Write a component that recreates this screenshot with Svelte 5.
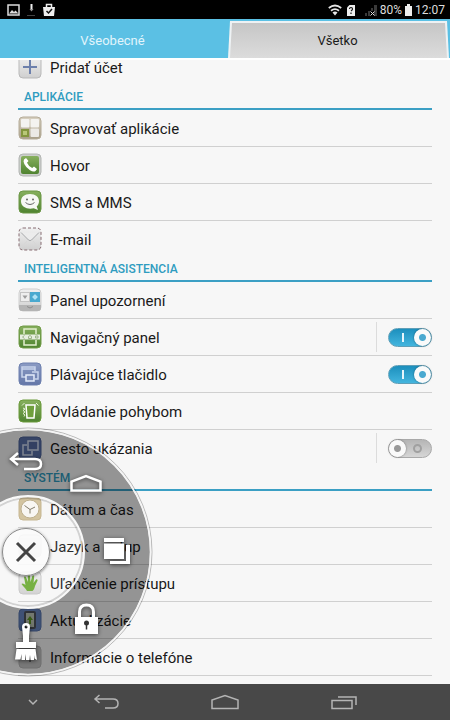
<script lang="ts">
  type Item = { icon: string; label: string; toggle?: boolean; on?: boolean; split?: boolean };
  type Section = { title: string; items: Item[] };

  let activeTab = $state('all');
  let menuOpen = $state(true);

  const tabs = [
    { id: 'general', label: 'Všeobecné' },
    { id: 'all', label: 'Všetko' },
  ];

  let sections: Section[] = $state([
    {
      title: 'Aplikácie',
      items: [
        { icon: 'apps', label: 'Spravovať aplikácie' },
        { icon: 'call', label: 'Hovor' },
        { icon: 'sms', label: 'SMS a MMS' },
        { icon: 'mail', label: 'E-mail' },
      ],
    },
    {
      title: 'Inteligentná asistencia',
      items: [
        { icon: 'panel', label: 'Panel upozornení' },
        { icon: 'navbar', label: 'Navigačný panel', toggle: true, on: true, split: true },
        { icon: 'float', label: 'Plávajúce tlačidlo', toggle: true, on: true },
        { icon: 'motion', label: 'Ovládanie pohybom' },
        { icon: 'gesture', label: 'Gesto ukázania', toggle: true, on: false, split: true },
      ],
    },
    {
      title: 'Systém',
      items: [
        { icon: 'clock', label: 'Dátum a čas' },
        { icon: 'lang', label: 'Jazyk a vstup' },
        { icon: 'hand', label: 'Uľahčenie prístupu' },
        { icon: 'update', label: 'Aktualizácie' },
        { icon: 'about', label: 'Informácie o telefóne' },
      ],
    },
  ]);
</script>

{#snippet glyph(name: string)}
  <svg class="icon" viewBox="0 0 24 24" aria-hidden="true">
    {#if name === 'add'}
      <rect x="1" y="1" width="22" height="22" rx="4" fill="url(#silver)" stroke="#b9b9b9" />
      <path d="M12 5v14M5 12h14" stroke="#6d80ac" stroke-width="2" />
    {:else if name === 'apps'}
      <rect x="1" y="1" width="22" height="22" rx="4" fill="url(#sand)" stroke="#b5ac98" />
      <rect x="3" y="3" width="8.500" height="8.500" rx="1" fill="#f4f3f0" />
      <rect x="12.500" y="3" width="8.500" height="8.500" rx="1" fill="#f4f3f0" />
      <rect x="12.500" y="12.500" width="8.500" height="8.500" rx="1" fill="#eceae6" />
      <rect x="4" y="14" width="6" height="6" fill="#b9c878" stroke="#84963f" stroke-width="2" />
    {:else if name === 'call'}
      <rect x="1" y="1" width="22" height="22" rx="4" fill="#cbcecb" stroke="#b2b5b2" />
      <rect x="3" y="3" width="18" height="18" rx="2" fill="url(#green)" />
      <path d="M6 6.500 8 5l2.500 3-1.500 1.800q1.500 3.600 5.200 5.200l1.800-1.500 3 2.500-1.500 2q-2 1.500-5.500-.8-4-2.500-5.700-6.200-1.300-3-.3-4.500z" fill="#fff" />
    {:else if name === 'sms'}
      <rect x="1" y="1" width="22" height="22" rx="4" fill="url(#green)" stroke="#6a9645" />
      <path d="M12 4c5.500 0 9 3 9 7.200 0 2.300-1 4-2.300 5.200l1.300 3.600-4.300-1.800c-6 1.600-12.700-1.200-12.700-7C3 7 6.500 4 12 4z" fill="#f7f8f5" />
      <circle cx="9" cy="9.500" r="1" fill="#666" />
      <circle cx="15" cy="9.500" r="1" fill="#666" />
      <path d="M7.500 12.500q4.500 4 9 0" fill="none" stroke="#666" />
    {:else if name === 'mail'}
      <rect x="1" y="1" width="22" height="22" rx="4" fill="url(#silver)" stroke="#876d72" stroke-dasharray="3 2" />
      <path d="M3 5.500 10.500 13q1.500 1.300 3 0L21 5.500" fill="#ececec" stroke="#a6a8aa" />
      <path d="M3 20.500 9 14M21 20.500 15 14" stroke="#d7d7d7" />
    {:else if name === 'panel'}
      <rect x="1" y="1" width="22" height="22" rx="4" fill="url(#silver)" stroke="#cfcfcf" />
      <path d="M1 17h22v3q0 3-3 3H4q-3 0-3-3z" fill="#b4b4b4" />
      <rect x="2.500" y="4.500" width="9" height="9" fill="#eee" stroke="#c3c3c3" />
      <path d="M4.500 7.500h5L7 11z" fill="#9c9c9c" />
      <rect x="12" y="4" width="10" height="10" fill="#49a9cf" />
      <circle cx="17" cy="9" r="2" fill="#d9f2fc" />
      <path d="M17 6v6M14 9h6" stroke="#9edcf3" />
      <path d="m9 18.500 3 1.500 3-1.500" fill="none" stroke="#8c8c8c" />
    {:else if name === 'navbar'}
      <rect x="1" y="1" width="22" height="22" rx="4" fill="url(#green)" stroke="#719b47" />
      <path d="M6 9V4h12v5M6 15v5h12v-5" fill="none" stroke="#e3efcf" stroke-width="1.500" />
      <rect x="2" y="9.500" width="20" height="5" fill="#e7eee0" />
      <path d="m6.500 10.500-2 1.500 2 1.500M10.500 13.500v-2l1.500-1 1.500 1v2zM17.500 11h2.500v2h-2.500z" fill="none" stroke="#9bb387" />
    {:else if name === 'float'}
      <rect x="1" y="1" width="22" height="22" rx="4" fill="url(#slate)" stroke="#6c7fae" />
      <path d="M8 15H4V5h13v4M4 7h13M14 10h6v7h-3" fill="none" stroke="#c8d3ec" stroke-width="1.500" />
      <rect x="8" y="13" width="8" height="6" fill="#7b8dbb" stroke="#e5ecfa" stroke-width="1.500" />
    {:else if name === 'motion'}
      <rect x="1" y="1" width="22" height="22" rx="4" fill="url(#green)" stroke="#6b9a3b" />
      <path d="M8 6h9l-1 13H9z" fill="#6f9f3d" stroke="#fff" stroke-width="1.500" />
      <path d="M4 6.500 6.500 4M20.500 6.500 18 4M5 9l2 1-2 1.500 2 1.500-2 1.500 2 1.500-1 1.500" fill="none" stroke="#e7f3d8" />
    {:else if name === 'gesture'}
      <rect x="1" y="1" width="22" height="22" rx="4" fill="#5b72ab" stroke="#4d639a" />
      <path d="M9 9H5v10h9v-4" fill="none" stroke="#d3dcf2" stroke-width="1.500" />
      <rect x="10" y="5" width="10" height="9" fill="#566ca3" stroke="#d3dcf2" stroke-width="1.500" />
    {:else if name === 'clock'}
      <rect x="1" y="1" width="22" height="22" rx="4" fill="#d0bf98" stroke="#c2b189" />
      <circle cx="12" cy="12" r="9" fill="#f8f6f1" stroke="#b9aa86" />
      <path d="m6.500 8.500 5.500 4 5-2.500M12 12.500v4" fill="none" stroke="#77705f" />
    {:else if name === 'lang'}
      <rect x="1" y="1" width="22" height="22" rx="4" fill="url(#silver)" stroke="#c9c9c9" />
    {:else if name === 'hand'}
      <rect x="1" y="1" width="22" height="22" rx="4" fill="url(#silver)" stroke="#c6c6c6" />
      <path d="M9 20c-1-2-4-5-5.500-7 1-1.300 2.500-.3 4 1L6 6c1.200-1 2 0 2.300 1l1.700 4-.3-7c.8-1.200 2-.8 2.200.4l.7 6.600L14.300 5c.8-1 2-.5 1.900.8L15.500 12 18 8.500c1-.7 2 .2 1.500 1.300L17 15c-.5 2-1 3.600-2.500 5z" fill="#6cab35" />
    {:else if name === 'update'}
      <rect x="1" y="1" width="22" height="22" rx="4" fill="#6a88c4" stroke="#5a76b0" />
      <rect x="7" y="4" width="10" height="16" rx="1" fill="#c0c8ba" stroke="#4f545e" stroke-width="2" />
      <path d="m12 8 3 4h-2v4h-2v-4H9z" fill="#5f9a24" />
    {:else}
      <rect x="1" y="1" width="22" height="22" rx="4" fill="#c8c8c8" stroke="#bababa" />
      <path d="M12 10v7M12 6v2" stroke="#777" stroke-width="2" />
    {/if}
  </svg>
{/snippet}

<svg class="defs" width="0" height="0" aria-hidden="true">
  <defs>
    <linearGradient id="silver" x2="0" y2="1">
      <stop stop-color="#f0f0f0" />
      <stop offset="1" stop-color="#cfcfcf" />
    </linearGradient>
    <linearGradient id="sand" x2="0" y2="1">
      <stop stop-color="#d9d2c2" />
      <stop offset="1" stop-color="#a89e88" />
    </linearGradient>
    <linearGradient id="green" x2="0" y2="1">
      <stop stop-color="#87b05e" />
      <stop offset="1" stop-color="#4f8330" />
    </linearGradient>
    <linearGradient id="slate" x2="0" y2="1">
      <stop stop-color="#8b9bc4" />
      <stop offset="1" stop-color="#6477a8" />
    </linearGradient>
  </defs>
</svg>

<div class="screen">
  <header class="status">
    <svg width="50" height="14" viewBox="0 0 50 14" aria-hidden="true">
      <rect x="1" y="2" width="11" height="10" fill="none" stroke="#ddd" stroke-width="1.500" />
      <path d="m2 10.500 3-3.500 2 2 1.500-1.500 3 3z" fill="#ddd" />
      <path d="M24.500 1v5" stroke="#eee" stroke-width="2" />
      <path d="M22.500 6h4l-2 2.500z" fill="#999" />
      <path d="M20 12.500h8" stroke="#444" />
      <path d="M36 4h12l-1 9H37z" fill="#eee" />
      <path d="M39.500 4V1.500h5V4" fill="none" stroke="#eee" stroke-width="1.500" />
      <path d="m39.500 8 2 2 3.500-4" fill="none" stroke="#111" stroke-width="1.500" />
    </svg>
    <div class="status-right">
      <svg width="50" height="14" viewBox="0 0 50 14" aria-hidden="true">
        <path d="M.8 5q6.200-5 12.400 0M3 7.700q4-3.200 8 0" fill="none" stroke="#e6e6e6" stroke-width="1.800" />
        <path d="m4.500 9.500 2.500 3 2.500-3q-2.500-2-5 0z" fill="#e6e6e6" />
        <path d="M19 4.500 21.500 2H27v11h-8z" fill="#eee" />
        <path d="M21.500 6q0-1.500 1.500-1.500T24.500 6q0 1-1.500 2M23 9.500V11" fill="none" stroke="#111" stroke-width="1.200" />
        <path d="M37 10h2v3h-2zM40 8h2v5h-2zM43 5h2v3h-2zM46 2h3v11h-3z" fill="#3a3a3a" />
        <path d="m42.500 8.500 4 4m0-4-4 4" stroke="#ddd" />
      </svg>
      <span>80%</span>
      <svg width="9" height="14" viewBox="0 0 9 14" aria-hidden="true">
        <path d="M3 1h3v2h2v10H1V3h2z" fill="#eee" />
      </svg>
      <span>12:07</span>
    </div>
  </header>

  <nav class="tabs">
    {#each tabs as tab}
      <button class="tab" class:active={activeTab === tab.id} onclick={() => (activeTab = tab.id)}>
        {tab.label}
      </button>
    {/each}
  </nav>

  <div class="body">
    <main class="list">
      <div class="row first">
        {@render glyph('add')}
        <span class="label">Pridať účet</span>
      </div>
      {#each sections as section}
        <h2>{section.title}</h2>
        {#each section.items as item}
          <div class="row">
            {@render glyph(item.icon)}
            {#if item.toggle}
              <label class="label" for="toggle-{item.icon}">{item.label}</label>
              <span class="switch-box" class:split={item.split}>
                <input id="toggle-{item.icon}" class="switch" type="checkbox" bind:checked={item.on} />
              </span>
            {:else}
              <span class="label">{item.label}</span>
            {/if}
          </div>
        {/each}
      {/each}
    </main>

    <div class="wheel">
      {#if menuOpen}
        <svg class="ring" viewBox="0 0 156 250" aria-hidden="true">
          <circle cx="28" cy="125" r="56" fill="#fff" fill-opacity="0.08" />
          <circle cx="28" cy="125" r="89" fill="none" stroke="#000" stroke-opacity="0.4" stroke-width="66" />
          <circle cx="28" cy="125" r="124" fill="none" stroke="#000" stroke-opacity="0.25" />
          <circle cx="28" cy="125" r="54" fill="none" stroke="#000" stroke-opacity="0.15" stroke-width="2" />
          <circle cx="28" cy="125" r="122.500" fill="none" stroke="#f4f4f4" stroke-width="1.500" />
          <circle cx="28" cy="125" r="56" fill="none" stroke="#f8f8f8" stroke-width="2" />
        </svg>
        <button class="action back" aria-label="Späť">
          <svg viewBox="0 0 40 40" fill="none" stroke="#fff" stroke-width="2.500">
            <path d="m12 12-7 6 7 6M5 18h24q6 0 6 5t-6 5H18" />
          </svg>
        </button>
        <button class="action home" aria-label="Domov">
          <svg viewBox="0 0 40 40" fill="none" stroke="#fff" stroke-width="2.500">
            <path d="M5.500 26.500v-9L20 12l14.500 5.500v9z" />
          </svg>
        </button>
        <button class="action recent" aria-label="Posledné aplikácie">
          <svg viewBox="0 0 40 40" fill="#fff">
            <path d="M7 7h20v4H7zM7 12.500h20V28H7z" />
            <path d="M29 14h4v19H13v-3h16z" />
          </svg>
        </button>
        <button class="action lock" aria-label="Uzamknúť">
          <svg viewBox="0 0 40 40">
            <path d="M13.500 19v-6q0-7 7-7t7 7v6" fill="none" stroke="#fff" stroke-width="3" />
            <path d="M9 18h23v17H9z" fill="#fff" />
            <circle cx="20.500" cy="24" r="2.500" fill="#333" />
            <path d="M20.500 25v5.500" stroke="#333" stroke-width="1.500" />
          </svg>
        </button>
        <button class="action clean" aria-label="Vyčistiť">
          <svg viewBox="0 0 40 40" fill="#fff">
            <path fill-rule="evenodd" d="M17 21V15l-1-9q0-4 4-4t4 4l-1 9v6h7v6H10v-6zM20 4.500a1.500 1.500 0 1 0 .1 0z" />
            <path d="M10.500 28h19L31 39l-2.500-1.500L28 34v5h-3.500L24 34l-.5 5H20l-.500-6-.5 6h-3.500v-6l-1 5.500H9z" />
          </svg>
        </button>
      {/if}
      <button class="close" aria-label="Menu" aria-expanded={menuOpen} onclick={() => (menuOpen = !menuOpen)}>
        <svg width="24" height="24" viewBox="0 0 24 24" stroke="#444" stroke-width="3">
          <path d="m3 3 18 18M21 3 3 21" />
        </svg>
      </button>
    </div>
  </div>

  <footer class="navbar">
    <button aria-label="Skryť panel">
      <svg width="28" height="20" viewBox="0 0 28 20"><path d="m10 8 4 4 4-4" /></svg>
    </button>
    <button aria-label="Späť">
      <svg width="28" height="20" viewBox="0 0 28 20"><path d="M6.500 3 2 7l4.500 4M2 7h18q5 0 5 4.500T20 16h-8" /></svg>
    </button>
    <button aria-label="Domov">
      <svg width="28" height="20" viewBox="0 0 28 20"><path d="M1 16.500V8l13-4.500L27 8v8.500z" /></svg>
    </button>
    <button aria-label="Posledné aplikácie">
      <svg width="28" height="20" viewBox="0 0 28 20"><path d="M2 8.500h20v8H2zM8 5h18v8" /></svg>
    </button>
  </footer>
</div>

<style>
  :global(body) {
    margin: 0;
  }

  .defs {
    position: absolute;
  }

  .screen {
    display: flex;
    flex-direction: column;
    min-height: 100vh;
    background: #f7f7f7;
    color: #1a1a1a;
    font-family: Roboto, 'Noto Sans', sans-serif;
  }

  button {
    padding: 0;
    border: 0;
    background: none;
    font: inherit;
    cursor: pointer;
  }

  .status {
    display: flex;
    justify-content: space-between;
    align-items: center;
    height: 19px;
    padding: 0 5px 0 7px;
    background: #000;
    color: #ddd;
    font-size: 12px;
  }

  .status-right {
    display: flex;
    align-items: center;
    gap: 2px;
  }

  .tabs {
    display: flex;
    height: 39px;
    background: #5bc0e4;
    border-bottom: 2px solid #fff;
  }

  .tab {
    position: relative;
    isolation: isolate;
    flex: 1;
    padding-top: 4px;
    color: #e2f5fc;
    font-size: 13px;
  }

  .tab.active {
    color: #1a1a1a;
  }

  .tab.active::before,
  .tab.active::after {
    content: '';
    position: absolute;
    z-index: -2;
    inset: 2px 1px 0 3px;
    background: #eef2f4;
    clip-path: polygon(2px 0, calc(100% - 2px) 0, 100% 100%, 0 100%);
  }

  .tab.active::after {
    z-index: -1;
    inset: 4px 3px 0 5px;
    background: linear-gradient(#c6c6c6, #dcdcdc);
  }

  .body {
    position: relative;
    flex: 1;
    overflow: hidden;
  }

  .list {
    padding: 0 18px 8px;
  }

  .row {
    display: flex;
    align-items: center;
    gap: 8px;
    height: 36px;
    border-bottom: 1px solid #d0d0d0;
  }

  .row:has(+ h2) {
    border-bottom-color: transparent;
  }

  /* list is scrolled a little under the tabs */
  .first {
    margin-top: -11px;
  }

  .icon {
    width: 24px;
    height: 24px;
  }

  .label {
    flex: 1;
    padding-top: 1px;
    font-size: 15px;
  }

  h2 {
    display: flex;
    align-items: center;
    height: 22px;
    margin: 0;
    padding-left: 6px;
    border-bottom: 2px solid #3b9fc4;
    color: #2f9cc0;
    font-size: 12px;
    font-weight: 500;
    text-transform: uppercase;
  }

  .switch-box {
    display: flex;
    align-items: center;
    height: 30px;
    padding-left: 11px;
  }

  .split {
    border-left: 1px solid #dcdcdc;
  }

  .switch {
    position: relative;
    width: 44px;
    height: 19px;
    margin: 0;
    border: 1px solid #a9a9a9;
    border-radius: 10px;
    appearance: none;
    background: linear-gradient(#b5b5b5, #d6d6d6);
    cursor: pointer;
  }

  .switch::before {
    content: '';
    position: absolute;
    top: 0;
    left: 0;
    width: 17px;
    height: 17px;
    border-radius: 50%;
    background: radial-gradient(circle, #999 3px, #fafafa 4px);
    box-shadow: 0 0 2px rgba(0, 0, 0, 0.5);
  }

  .switch::after {
    content: '';
    position: absolute;
    top: 4px;
    right: 9px;
    width: 5px;
    height: 5px;
    border: 2px solid #a0a0a0;
    border-radius: 50%;
  }

  .switch:checked {
    border-color: #5f9fb8;
    background: linear-gradient(#1c8fbd, #43b5de);
  }

  .switch:checked::before {
    left: auto;
    right: 0;
    background: radial-gradient(circle, #4aa9d0 3px, #fafafa 4px);
  }

  .switch:checked::after {
    top: 4px;
    right: 27px;
    width: 2px;
    height: 9px;
    border: 0;
    border-radius: 0;
    background: #e6f6fc;
  }

  /* floating quick menu, laid over the list */
  .wheel {
    position: absolute;
    left: 0;
    bottom: 7px;
    width: 156px;
    height: 250px;
    pointer-events: none;
  }

  .wheel button {
    position: absolute;
    pointer-events: auto;
  }

  .ring {
    display: block;
    width: 156px;
    height: 250px;
  }

  .action {
    width: 40px;
    height: 40px;
  }

  .action svg {
    display: block;
    filter: drop-shadow(0 1px 2px rgba(0, 0, 0, 0.6));
  }

  .back {
    left: 6px;
    top: 14px;
  }

  .home {
    left: 66px;
    top: 37px;
  }

  .recent {
    left: 97px;
    top: 104px;
  }

  .lock {
    left: 66px;
    top: 172px;
  }

  .clean {
    left: 6px;
    top: 194px;
  }

  .close {
    left: 2px;
    top: 101px;
    display: flex;
    justify-content: center;
    align-items: center;
    width: 48px;
    height: 48px;
    border: 1px solid #8a8a8a;
    border-radius: 50%;
    background: rgba(251, 251, 251, 0.9);
    box-shadow: 0 1px 3px rgba(0, 0, 0, 0.5);
  }

  .navbar {
    display: grid;
    grid-template-columns: 66fr 82fr 154fr 84fr 64fr;
    height: 36px;
    background: #484848;
  }

  .navbar button {
    display: flex;
    justify-content: center;
    align-items: center;
  }

  .navbar svg {
    fill: none;
    stroke: #b4b4b4;
    stroke-width: 1.5;
  }
</style>
